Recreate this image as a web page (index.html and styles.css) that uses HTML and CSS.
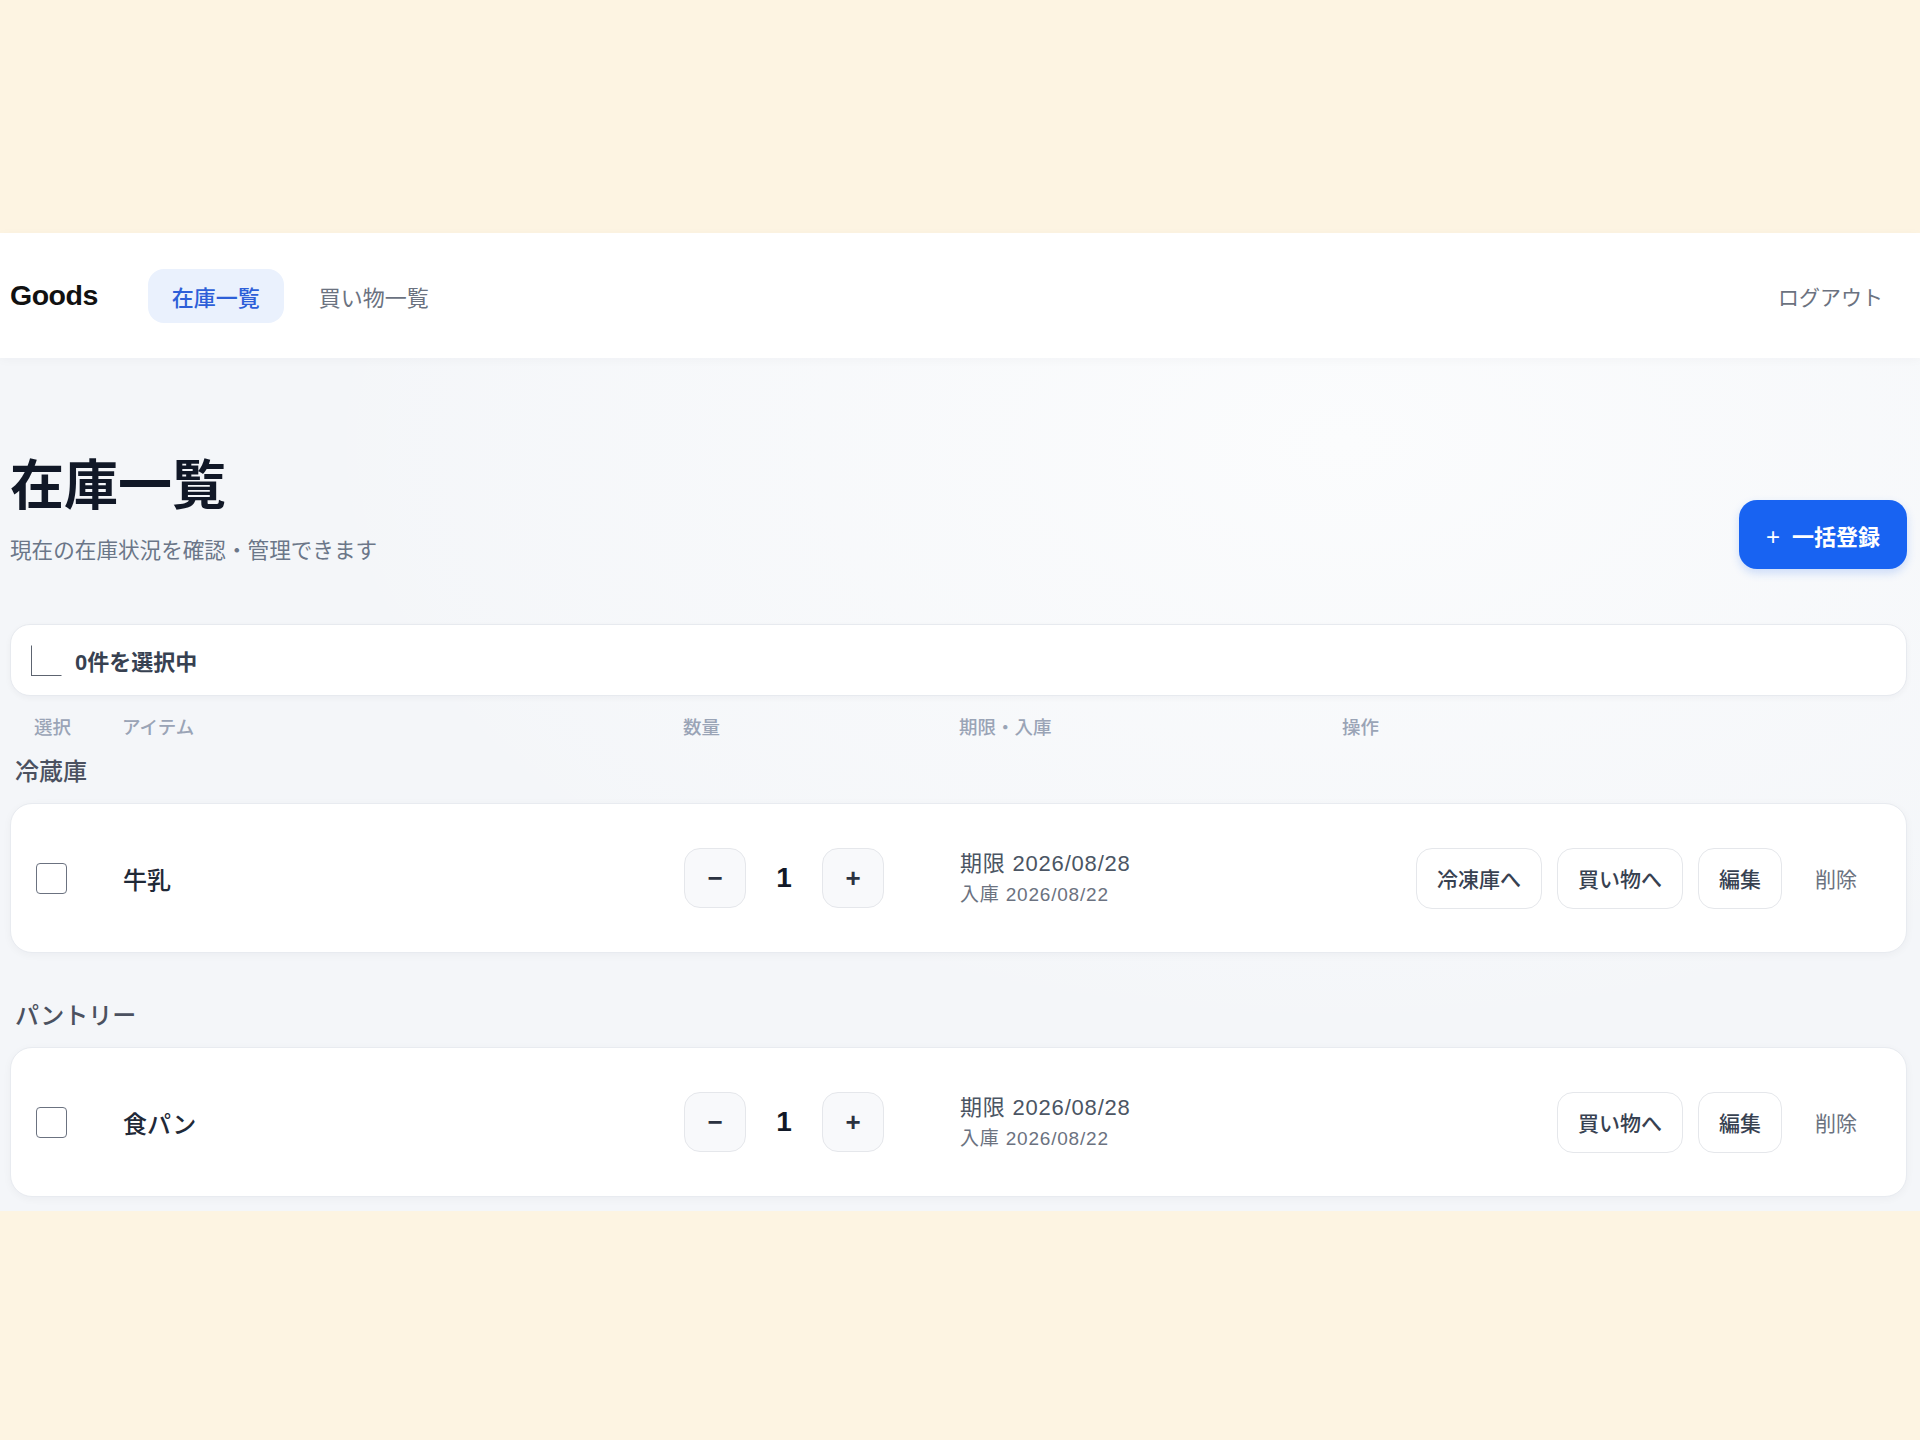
FILE: index.html
```html
<!DOCTYPE html>
<html lang="ja">
<head>
    <meta charset="UTF-8">
    <meta name="viewport" content="width=device-width, initial-scale=1.0">
    <title>Goods - 在庫一覧</title>
    <link rel="stylesheet" href="styles.css">
</head>
<body>

    <div class="app">
        <header class="topbar">
            <div class="brand">Goods</div>
            <nav class="nav">
                <a class="nav-link active" href="#">在庫一覧</a>
                <a class="nav-link" href="#">買い物一覧</a>
            </nav>
            <a class="logout" href="#">ログアウト</a>
        </header>

        <main class="main">
            <!-- Seitenkopf -->
            <div class="page-head">
                <div>
                    <h1>在庫一覧</h1>
                    <p class="subtitle">現在の在庫状況を確認・管理できます</p>
                </div>
                <button class="btn-primary"><span class="plus">+</span>一括登録</button>
            </div>

            <!-- Auswahl -->
            <div class="select-bar">
                <span class="select-all"></span>
                <span class="select-count">0件を選択中</span>
            </div>

            <div class="cols">
                <span>選択</span>
                <span>アイテム</span>
                <span>数量</span>
                <span>期限・入庫</span>
                <span>操作</span>
            </div>

            <section class="group">
                <h2>冷蔵庫</h2>
                <div class="item">
                    <span class="check"></span>
                    <span class="name">牛乳</span>
                    <div class="qty">
                        <button class="qty-btn">&minus;</button>
                        <span class="qty-num">1</span>
                        <button class="qty-btn">+</button>
                    </div>
                    <div class="dates">
                        <div class="due">期限 2026/08/28</div>
                        <div class="stocked">入庫 2026/08/22</div>
                    </div>
                    <div class="actions">
                        <button class="btn">冷凍庫へ</button>
                        <button class="btn">買い物へ</button>
                        <button class="btn">編集</button>
                        <button class="btn-text">削除</button>
                    </div>
                </div>
            </section>

            <section class="group">
                <h2>パントリー</h2>
                <div class="item">
                    <span class="check"></span>
                    <span class="name">食パン</span>
                    <div class="qty">
                        <button class="qty-btn">&minus;</button>
                        <span class="qty-num">1</span>
                        <button class="qty-btn">+</button>
                    </div>
                    <div class="dates">
                        <div class="due">期限 2026/08/28</div>
                        <div class="stocked">入庫 2026/08/22</div>
                    </div>
                    <div class="actions">
                        <button class="btn">買い物へ</button>
                        <button class="btn">編集</button>
                        <button class="btn-text">削除</button>
                    </div>
                </div>
            </section>
        </main>
    </div>

</body>
</html>
```

FILE: styles.css
```css
body {
    font-family: "Liberation Sans", "Noto Sans CJK JP", sans-serif;
    background-color: #fdf4e2;
    color: #1f2937;
    margin: 0;
    padding: 233px 0 0 0;
}

.app {
    background-color: #f4f6f9;
}

/* Kopfzeile */
.topbar {
    display: flex;
    align-items: center;
    height: 125px;
    padding: 0 37px 0 10px;
    background-color: #fff;
    box-shadow: 0 2px 10px rgba(30, 40, 70, 0.03);
    position: relative;
}

.brand {
    font-size: 28.5px;
    font-weight: bold;
    letter-spacing: -0.5px;
    color: #111;
    margin-right: 50px;
}

.nav {
    display: flex;
    gap: 11px;
}

.nav-link {
    display: flex;
    align-items: center;
    height: 54px;
    padding: 0 24px;
    border-radius: 16px;
    font-size: 22px;
    color: #6b7280;
    text-decoration: none;
}

.nav-link.active {
    background-color: #eaf1fd;
    color: #2d5fd8;
    font-weight: 500;
}

.logout {
    margin-left: auto;
    font-size: 21px;
    color: #6b7280;
    text-decoration: none;
}

/* Inhalt */
.main {
    padding: 96px 13px 14px 10px;
    background: radial-gradient(ellipse at 70% 10%, #fbfcfd 0%, rgba(251, 252, 253, 0) 55%), #f4f6f9;
}

.page-head {
    display: flex;
    justify-content: space-between;
    align-items: flex-end;
}

h1 {
    margin: 0;
    font-size: 54px;
    line-height: 65px;
    font-weight: bold;
    color: #111827;
}

.subtitle {
    margin: 17px 0 0 0;
    font-size: 21.6px;
    line-height: 30px;
    color: #6b7688;
}

.btn-primary {
    height: 69px;
    padding: 0 27px;
    margin-bottom: -3px;
    border: none;
    border-radius: 18px;
    background-color: #1863f2;
    color: white;
    font-family: inherit;
    font-size: 22px;
    font-weight: bold;
    cursor: pointer;
    box-shadow: 0 4px 10px rgba(24, 99, 242, 0.2);
}

.btn-primary .plus {
    font-weight: normal;
    font-size: 24px;
    margin-right: 12px;
}

.select-bar {
    display: flex;
    align-items: center;
    gap: 13px;
    height: 70px;
    margin-top: 58px;
    padding: 0 20px;
    background-color: #fff;
    border: 1px solid #e7eaef;
    border-radius: 20px;
    box-shadow: 0 2px 6px rgba(20, 30, 60, 0.04);
}

.select-all {
    width: 29px;
    height: 29px;
    border-left: 1.5px solid #5d6470;
    border-bottom: 1.5px solid #5d6470;
    border-top: 1.5px solid transparent;
    border-right: 1.5px solid transparent;
}

.select-count {
    font-size: 22px;
    font-weight: bold;
    color: #374151;
}

/* Tabellenraster */
.cols, .item {
    display: grid;
    grid-template-columns: 88px 561px 276px 383px 1fr;
    align-items: center;
    padding: 0 31px 0 24px;
}

.cols {
    margin-top: 20px;
    font-size: 18.5px;
    line-height: 24px;
    font-weight: 500;
    color: #9aa4b6;
}

.group h2 {
    margin: 16px 0 15px 5px;
    font-size: 24px;
    line-height: 32px;
    font-weight: 500;
    color: #4b5160;
}

.group + .group h2 {
    margin-top: 47px;
}

.item {
    height: 148px;
    background-color: #fff;
    border: 1px solid #e8ebf0;
    border-radius: 22px;
    box-shadow: 0 2px 8px rgba(20, 30, 60, 0.04);
}

.check {
    width: 29px;
    height: 29px;
    margin-left: 1px;
    border: 1.5px solid #6b7280;
    border-radius: 4px;
}

.name {
    font-size: 24px;
    font-weight: 500;
    color: #1f2937;
}

.qty {
    display: flex;
    align-items: center;
    gap: 24px;
}

.qty-btn {
    width: 62px;
    height: 60px;
    border: 1px solid #e5e7eb;
    border-radius: 16px;
    background-color: #f8f9fb;
    color: #2b3240;
    font-family: inherit;
    font-size: 26px;
    font-weight: bold;
    cursor: pointer;
}

.qty-num {
    min-width: 28px;
    text-align: center;
    font-size: 28px;
    font-weight: bold;
    color: #111827;
}

.dates .due {
    font-size: 22px;
    line-height: 30px;
    letter-spacing: 0.8px;
    color: #4b5563;
}

.dates .stocked {
    margin-top: 3px;
    font-size: 19px;
    line-height: 26px;
    letter-spacing: 0.8px;
    color: #6b7280;
}

.actions {
    display: flex;
    justify-content: flex-end;
    gap: 15px;
}

.btn {
    height: 61px;
    padding: 0 20px;
    border: 1px solid #e5e7eb;
    border-radius: 16px;
    background-color: #fff;
    color: #374151;
    font-family: inherit;
    font-size: 21px;
    font-weight: 500;
    cursor: pointer;
}

.btn-text {
    height: 61px;
    padding: 0 18px;
    border: none;
    background: none;
    color: #6b7280;
    font-family: inherit;
    font-size: 21px;
    cursor: pointer;
}
```
